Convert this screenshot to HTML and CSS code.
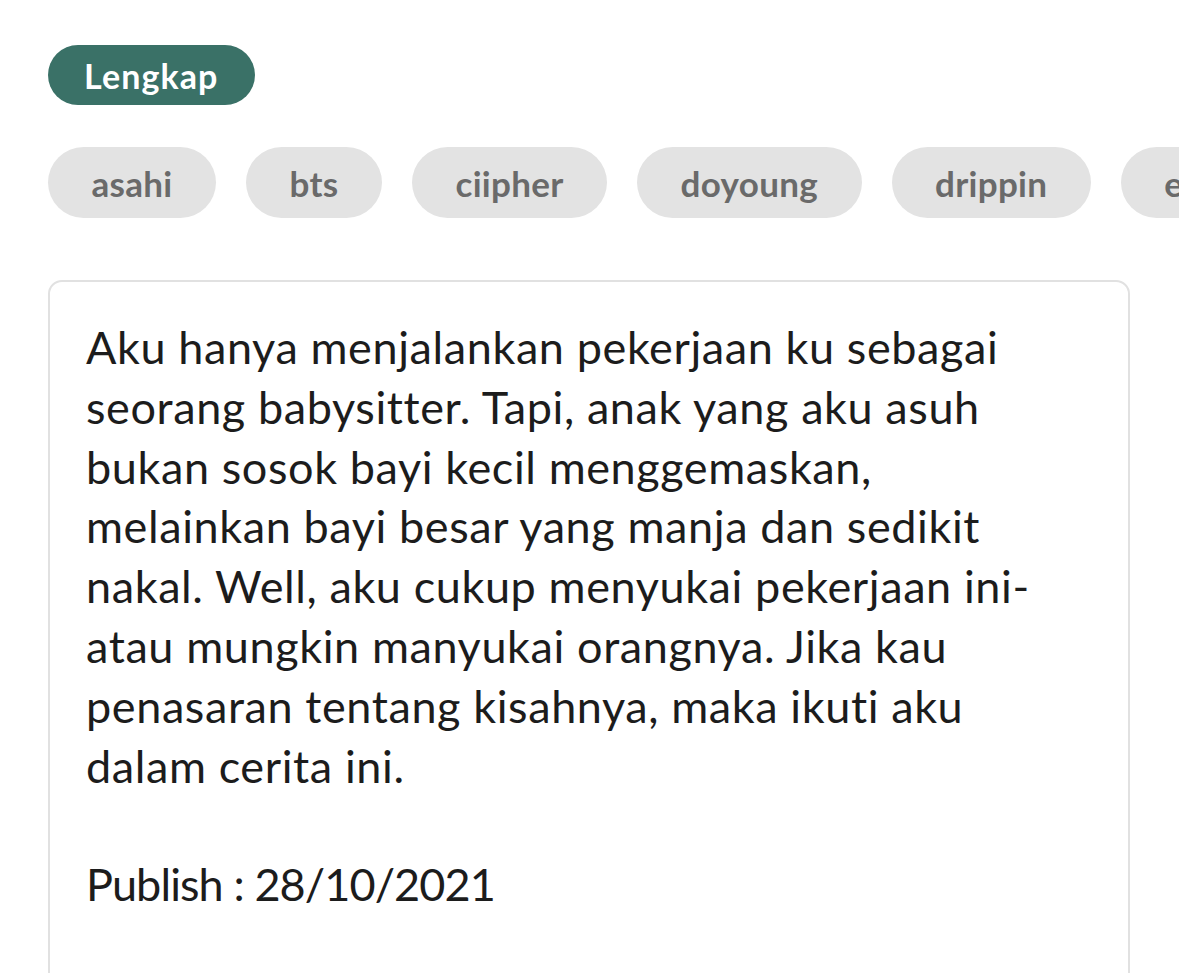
FILE: index.html
```html
<!DOCTYPE html>
<html lang="id">
<head>
<meta charset="utf-8">
<title>Lengkap</title>
<link rel="stylesheet" href="styles.css">
</head>
<body>
<main class="page">
  <div class="status-row">
    <span class="status">Lengkap</span>
  </div>
  <ul class="tags">
    <li class="tag">asahi</li>
    <li class="tag">bts</li>
    <li class="tag">ciipher</li>
    <li class="tag">doyoung</li>
    <li class="tag">drippin</li>
    <li class="tag">enhypen</li>
  </ul>
  <section class="card">
    <p class="desc">Aku hanya menjalankan pekerjaan ku sebagai<br>seorang babysitter. Tapi, anak yang aku asuh<br>bukan sosok bayi kecil menggemaskan,<br>melainkan bayi besar yang manja dan sedikit<br>nakal. Well, aku cukup menyukai pekerjaan ini-<br>atau mungkin manyukai orangnya. Jika kau<br>penasaran tentang kisahnya, maka ikuti aku<br>dalam cerita ini.</p>
    <p class="desc publish">Publish : 28/10/2021</p>
  </section>
</main>
</body>
</html>
```
FILE: styles.css
```css
html, body {
  margin: 0;
  padding: 0;
  background: #ffffff;
  overflow: hidden;
}
body {
  font-family: "Lato", "Liberation Sans", sans-serif;
  color: #1f1f1f;
}
.page {
  padding: 45px 0 0 48px;
}
.status-row {
  display: flex;
}
.status {
  display: inline-flex;
  align-items: center;
  height: 60px;
  padding: 0 36px;
  border-radius: 30px;
  background: #3a7167;
  color: #ffffff;
  font-weight: 700;
  font-size: 34px;
  letter-spacing: 1.1px;
}
.tags {
  list-style: none;
  margin: 42px 0 0 0;
  padding: 0;
  display: flex;
  gap: 30px;
  white-space: nowrap;
}
.tag {
  flex: none;
  display: inline-flex;
  align-items: center;
  height: 71px;
  padding: 0 43.5px;
  border-radius: 36px;
  background: #e3e3e3;
  color: #6a6a6a;
  font-weight: 700;
  font-size: 35px;
  letter-spacing: 0.3px;
}
.card {
  margin-top: 62px;
  width: 1082px;
  box-sizing: border-box;
  border: 2px solid #e1e1e1;
  border-radius: 14px;
  padding: 36px 36px 200px 36px;
}
.desc {
  margin: 0;
  font-size: 45px;
  line-height: 59.8px;
  letter-spacing: 0.6px;
  color: #1c1c1c;
}
.publish {
  margin-top: 59px;
  letter-spacing: -0.9px;
}
```
